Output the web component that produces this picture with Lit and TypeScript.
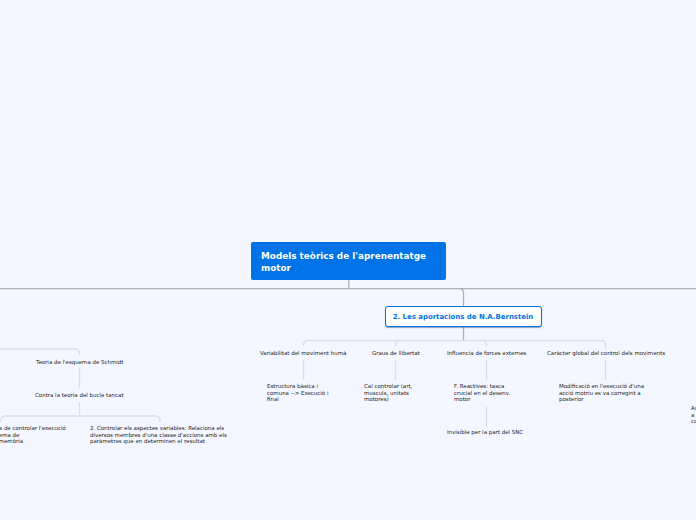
import { LitElement, html, css, svg } from "lit";
import { customElement } from "lit/decorators.js";

const sub: [number, number, string][] = [
  [36, 359, "Teoria de l'esquema de Schmidt"],
  [35, 392, "Contra la teoria del bucle tancat"],
  [-28, 425, "1. Capaços de controlar l'execució<br>d'un esquema de<br>des de la memòria"],
  [90, 425, "2. Controlar els aspectes variables: Relaciona els<br>diversos membres d'una classe d'accions amb els<br>paràmetres que en determinen el resultat"],
  [260, 350, "Variabilitat del moviment humà"],
  [372, 350, "Graus de llibertat"],
  [447, 350, "Influencia de forces externes"],
  [547, 350, "Caràcter global del control dels moviments"],
  [267, 383, "Estructura bàsica i<br>comuna --&gt; Execució i<br>final"],
  [364, 383, "Cal controlar (art,<br>musculs, unitats<br>motores)"],
  [454, 383, "F. Reactives: tasca<br>crucial en el desenv.<br>motor"],
  [447, 429, "Invisible per la part del SNC"],
  [559, 383, "Modificació en l'execució d'una<br>acció motriu es va corregint a<br>posterior"],
  [691, 405, "Au<br>a l<br>co"],
];

@customElement("app-root")
export class AppRoot extends LitElement {
  static styles = css`
    :host { display: block; width: 696px; height: 520px; position: relative; overflow: hidden; background: #f4f7ff; font-family: "DejaVu Sans", sans-serif; }
    .lines { position: absolute; inset: 0; width: 696px; height: 520px; }
    .root { position: absolute; left: 251px; top: 242px; width: 195px; height: 38px; box-sizing: border-box; padding: 8px 10px; background: #0073e6; border-radius: 2px; color: #fff; font-weight: 700; font-size: 8.85px; line-height: 12px; }
    .main { position: absolute; left: 384.5px; top: 306px; width: 157px; height: 21px; box-sizing: border-box; background: #fff; border: 1px solid #0073e6; border-radius: 3px; box-shadow: 0 1px 1px rgba(0,60,140,.45); color: #0073e6; font-weight: 700; font-size: 6.95px; display: flex; align-items: center; justify-content: center; }
    .t { position: absolute; font-size: 5.47px; line-height: 6.6px; color: #222; white-space: nowrap; }
  `;
  render() {
    return html`
      <svg class="lines" viewBox="0 0 696 520" fill="none">
        ${svg`<g stroke="#aeb0b4" stroke-width="1.3">
          <path d="M0 288.6H696M348.8 280V288.6M459 288.6Q463.5 288.6 463.5 293V306M463.5 327V340"/>
        </g>
        <g stroke="#dbdee8" stroke-width="1.3">
          <path d="M303.5 346V345Q303.5 340.5 308 340.5H601Q605.5 340.5 605.5 345V349"/>
          <path d="M395.5 346V345Q395.5 340.5 400 340.5M482 340.5Q486.5 340.5 486.5 345V346"/>
          <path d="M303.5 360V380M395.5 360V380M486.5 360V380M605.5 360V380M486.5 407V427"/>
          <path d="M0 349H75Q79.5 349 79.5 353.5V355M79.5 368V388M79.5 402V415"/>
          <path d="M1 422V420.5Q1 416 6 416H155Q160 416 160 420.5V422"/>
        </g>`}
      </svg>
      <div class="root">Models teòrics de l'aprenentatge<br>motor</div>
      <div class="main">2. Les aportacions de N.A.Bernstein</div>
      ${sub.map(([x, y, s]) => html`<div class="t" style="left:${x}px;top:${y}px" .innerHTML=${s}></div>`)}
    `;
  }
}
